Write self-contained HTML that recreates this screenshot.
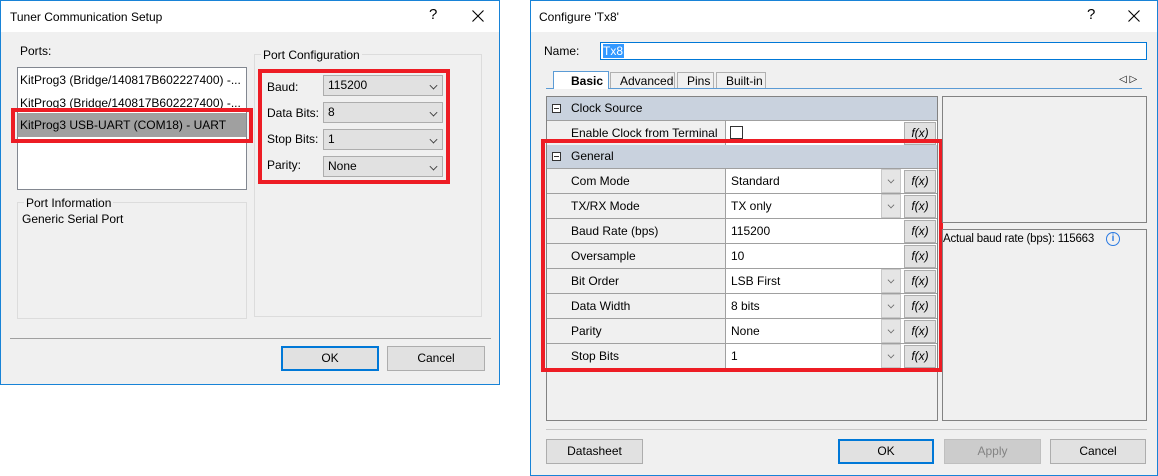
<!DOCTYPE html>
<html><head><meta charset="utf-8"><style>
*{box-sizing:border-box;margin:0;padding:0}
body{width:1158px;height:476px;background:#fff;position:relative;overflow:hidden;font-family:"Liberation Sans",sans-serif;font-size:12px;color:#000}
.a{position:absolute}
.t{position:absolute;white-space:nowrap;line-height:14px}
.dlg{position:absolute;background:#f0f0f0;border:1px solid #1883d7}
.title{position:absolute;left:0;top:0;right:0;height:31px;background:#fff}
.btn{position:absolute;background:#e1e1e1;border:1px solid #adadad;text-align:center;line-height:23px}
.ok{border:2px solid #0078d7;line-height:21px}
.combo{position:absolute;background:#e1e1e1;border:1px solid #adadad;height:21px;line-height:19px;padding-left:4px}
.chev{position:absolute;right:5px;top:6px;width:7px;height:7px;border-right:1px solid #333;border-bottom:1px solid #333;transform:rotate(45deg) scale(.8)}
.red{position:absolute;border:4px solid #ed1c24}
.grp{position:absolute;border:1px solid #dcdcdc}
.row{position:absolute;left:0;width:390px;height:25px;border-bottom:1px solid #a0a0a0}
.lab{position:absolute;left:0;width:179px;height:24px;background:#f0f0f0;border-right:1px solid #a0a0a0;padding-left:24px;line-height:24px}
.val{position:absolute;left:179px;width:211px;height:24px;background:#fff;padding-left:5px;line-height:24px}
.dd{position:absolute;left:334px;top:0;width:20px;height:24px;background:#e5e5e5;border:1px solid #c8c8c8}
.dd .chev{right:6px;top:7px;width:6px;height:6px;border-color:#666}
.fx{position:absolute;left:357px;top:1px;width:32px;height:23px;background:#e1e1e1;border:1px solid #adadad;font-style:italic;text-align:center;line-height:21px;font-size:12px}
.hdr{position:absolute;left:0;width:390px;height:24px;background:#c9d2de;border-bottom:1px solid #a0a0a0;line-height:23px;padding-left:24px}
.minus{position:absolute;left:5px;top:7px;width:9px;height:9px;border:1px solid #333;background:#fff}
.minus:after{content:"";position:absolute;left:1px;top:3px;width:5px;height:1px;background:#333}
.x{position:absolute;top:9px;width:12px;height:12px}
</style></head><body>

<!-- Left dialog -->
<div class="dlg" style="left:0;top:0;width:500px;height:385px">
 <div class="title"></div>
 <div class="t" style="left:9px;top:9px">Tuner Communication Setup</div>
 <div class="t" style="left:428px;top:7px;font-size:15px">?</div>
 <svg class="x" style="left:471px" viewBox="0 0 12 12"><path d="M0.5 0.5L11.5 11.5M11.5 0.5L0.5 11.5" stroke="#000" stroke-width="1.1" fill="none"/></svg>
 <div class="t" style="left:19px;top:43px">Ports:</div>
 <div class="a" style="left:16px;top:66px;width:230px;height:123px;background:#fff;border:1px solid #828790"></div>
 <div class="t" style="left:19px;top:72px">KitProg3 (Bridge/140817B602227400) -...</div>
 <div class="t" style="left:19px;top:95px">KitProg3 (Bridge/140817B602227400) -...</div>
 <div class="a" style="left:17px;top:112px;width:228px;height:24px;background:#a0a0a0"></div>
 <div class="t" style="left:19px;top:117px">KitProg3 USB-UART (COM18) - UART</div>
 <div class="red" style="left:10px;top:107px;width:242px;height:35px"></div>
 <div class="grp" style="left:16px;top:201px;width:230px;height:117px"></div>
 <div class="t" style="left:23px;top:195px;background:#f0f0f0;padding:0 2px">Port Information</div>
 <div class="t" style="left:21px;top:211px">Generic Serial Port</div>
 <div class="grp" style="left:253px;top:53px;width:228px;height:263px"></div>
 <div class="t" style="left:260px;top:47px;background:#f0f0f0;padding:0 2px">Port Configuration</div>
 <div class="t" style="left:266px;top:79px">Baud:</div>
 <div class="t" style="left:266px;top:105px">Data Bits:</div>
 <div class="t" style="left:266px;top:131px">Stop Bits:</div>
 <div class="t" style="left:266px;top:157px">Parity:</div>
 <div class="combo" style="left:322px;top:74px;width:120px">115200<div class="chev"></div></div>
 <div class="combo" style="left:322px;top:101px;width:120px">8<div class="chev"></div></div>
 <div class="combo" style="left:322px;top:128px;width:120px">1<div class="chev"></div></div>
 <div class="combo" style="left:322px;top:155px;width:120px">None<div class="chev"></div></div>
 <div class="red" style="left:257px;top:68px;width:192px;height:115px"></div>
 <div class="a" style="left:9px;top:337px;width:481px;height:1px;background:#a0a0a0"></div>
 <div class="btn ok" style="left:280px;top:345px;width:98px;height:25px">OK</div>
 <div class="btn" style="left:386px;top:345px;width:98px;height:25px">Cancel</div>
</div>

<!-- Right dialog -->
<div class="dlg" style="left:530px;top:0;width:628px;height:476px">
 <div class="title"></div>
 <div class="t" style="left:8px;top:9px">Configure 'Tx8'</div>
 <div class="t" style="left:556px;top:7px;font-size:15px">?</div>
 <svg class="x" style="left:597px" viewBox="0 0 12 12"><path d="M0.5 0.5L11.5 11.5M11.5 0.5L0.5 11.5" stroke="#000" stroke-width="1.1" fill="none"/></svg>
 <div class="t" style="left:13px;top:43px">Name:</div>
 <div class="a" style="left:69px;top:41px;width:547px;height:18px;background:#fff;border:1px solid #0078d7"></div>
 <div class="a" style="left:72px;top:43px;width:21px;height:14px;background:#3399ff"></div>
 <div class="t" style="left:72px;top:43px;color:#fff">Tx8</div>
 <!-- tabs -->
 <div class="a" style="left:15px;top:87px;width:596px;height:1px;background:#5b9bd5"></div>
 <div class="a" style="left:22px;top:70px;width:56px;height:18px;background:#fff;border:1px solid #5b9bd5;border-bottom:none"></div>
 <div class="t" style="left:40px;top:73px;font-weight:bold">Basic</div>
 <div class="a" style="left:79px;top:71px;width:65px;height:16px;border:1px solid #b0b0b0;border-bottom:none"></div>
 <div class="t" style="left:89px;top:73px">Advanced</div>
 <div class="a" style="left:146px;top:71px;width:37px;height:16px;border:1px solid #b0b0b0;border-bottom:none"></div>
 <div class="t" style="left:156px;top:73px">Pins</div>
 <div class="a" style="left:185px;top:71px;width:50px;height:16px;border:1px solid #b0b0b0;border-bottom:none"></div>
 <div class="t" style="left:195px;top:73px">Built-in</div>
 <div class="t" style="left:588px;top:72px;font-size:10px">◁ ▷</div>
 <!-- grid -->
 <div class="a" style="left:15px;top:95px;width:392px;height:325px;border:1px solid #828282;background:#f0f0f0">
  <div class="hdr" style="top:0"><div class="minus"></div>Clock Source</div>
  <div class="row" style="top:24px"><div class="lab">Enable Clock from Terminal</div><div class="val"><div class="a" style="left:4px;top:5px;width:13px;height:13px;border:1px solid #333"></div></div><div class="fx">f(x)</div></div>
  <div class="hdr" style="top:48px"><div class="minus"></div>General</div>
  <div class="row" style="top:72px"><div class="lab">Com Mode</div><div class="val">Standard</div><div class="dd"><div class="chev"></div></div><div class="fx">f(x)</div></div>
  <div class="row" style="top:97px"><div class="lab">TX/RX Mode</div><div class="val">TX only</div><div class="dd"><div class="chev"></div></div><div class="fx">f(x)</div></div>
  <div class="row" style="top:122px"><div class="lab">Baud Rate (bps)</div><div class="val">115200</div><div class="fx">f(x)</div></div>
  <div class="row" style="top:147px"><div class="lab">Oversample</div><div class="val">10</div><div class="fx">f(x)</div></div>
  <div class="row" style="top:172px"><div class="lab">Bit Order</div><div class="val">LSB First</div><div class="dd"><div class="chev"></div></div><div class="fx">f(x)</div></div>
  <div class="row" style="top:197px"><div class="lab">Data Width</div><div class="val">8 bits</div><div class="dd"><div class="chev"></div></div><div class="fx">f(x)</div></div>
  <div class="row" style="top:222px"><div class="lab">Parity</div><div class="val">None</div><div class="dd"><div class="chev"></div></div><div class="fx">f(x)</div></div>
  <div class="row" style="top:247px"><div class="lab">Stop Bits</div><div class="val">1</div><div class="dd"><div class="chev"></div></div><div class="fx">f(x)</div></div>
 </div>
 <div class="red" style="left:10px;top:138px;width:402px;height:233px"></div>
 <div class="a" style="left:411px;top:95px;width:205px;height:127px;border:1px solid #828282"></div>
 <div class="a" style="left:411px;top:228px;width:205px;height:192px;border:1px solid #828282"></div>
 <div class="t" style="left:412px;top:231px;font-size:11.5px;letter-spacing:-0.2px">Actual baud rate (bps): 115663</div>
 <div class="a" style="left:575px;top:231px;width:14px;height:14px;border:1.5px solid #2a7ae2;border-radius:50%;color:#2a7ae2;font-size:10px;font-weight:bold;text-align:center;line-height:11px">i</div>
 <div class="a" style="left:15px;top:428px;width:601px;height:1px;background:#c8c8c8"></div>
 <div class="btn" style="left:15px;top:438px;width:97px;height:25px">Datasheet</div>
 <div class="btn ok" style="left:307px;top:438px;width:96px;height:25px">OK</div>
 <div class="btn" style="left:413px;top:438px;width:97px;height:25px;background:#cccccc;border-color:#bfbfbf;color:#838383">Apply</div>
 <div class="btn" style="left:519px;top:438px;width:96px;height:25px">Cancel</div>
</div>
</body></html>
